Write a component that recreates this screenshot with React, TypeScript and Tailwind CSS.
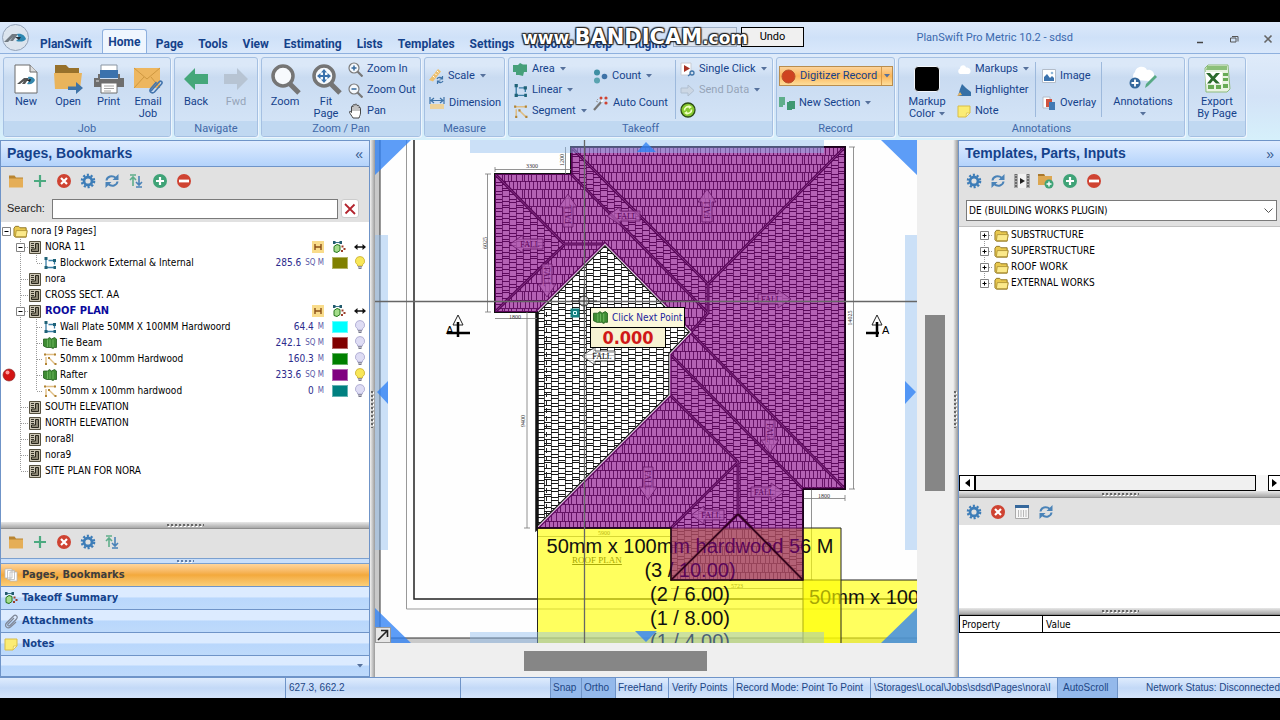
import { ReactNode } from "react";

const tahoma = "font-['DejaVu_Sans_Condensed','Liberation_Sans',sans-serif]";

const Caret = () => (
    <svg width="6" height="4" viewBox="0 0 6 4" className="shrink-0">
        <path d="M0 0h6L3 3.5z" fill="#56719c" />
    </svg>
);

/* ---------- toolbar icons ---------- */

const FolderIcon = () => (
    <svg width="16" height="16" viewBox="0 0 16 16">
        <path d="M1 2.5h5.5l1.5 2H15V8H1z" fill="#b98532" />
        <path d="M1 5.5h14v9H1z" fill="#e5ae57" />
    </svg>
);

const PlusIcon = () => (
    <svg width="16" height="16" viewBox="0 0 16 16">
        <path d="M8 2v12M2 8h12" stroke="#4caa80" strokeWidth="2.2" />
    </svg>
);

const DeleteIcon = () => (
    <svg width="16" height="16" viewBox="0 0 16 16">
        <circle cx="8" cy="8" r="7" fill="#cf4332" />
        <path d="M5 5l6 6M11 5l-6 6" stroke="#fff" strokeWidth="2.2" />
    </svg>
);

const GearIcon = () => (
    <svg width="16" height="16" viewBox="0 0 16 16" fill="none" stroke="#3d7db8">
        <circle cx="8" cy="8" r="4" strokeWidth="2.8" />
        <circle cx="8" cy="8" r="6.2" strokeWidth="2.2" strokeDasharray="2.1 1.8" />
    </svg>
);

const RefreshIcon = () => (
    <svg width="16" height="16" viewBox="0 0 16 16" fill="none" stroke="#4a83b8" strokeWidth="2">
        <path d="M2.5 7.5C3 3.5 8 1.8 12 5M13.5 8.5C13 12.5 8 14.2 4 11" />
        <path d="M14.5 1v6H8.500zM1.500 15V9h6z" fill="#4a83b8" stroke="none" />
    </svg>
);

const SortIcon = () => (
    <svg width="16" height="16" viewBox="0 0 16 16" fill="none" strokeWidth="1.6">
        <path d="M2 2h6M5 13V4M2 7l3-3 3 3" stroke="#5fae8b" />
        <path d="M8 14h6M11 3v9M8 9l3 3 3-3" stroke="#4a83b8" />
    </svg>
);

const AddCircleIcon = () => (
    <svg width="16" height="16" viewBox="0 0 16 16">
        <circle cx="8" cy="8" r="7" fill="#3fa377" />
        <path d="M8 4v8M4 8h8" stroke="#fff" strokeWidth="2.2" />
    </svg>
);

const RemoveCircleIcon = () => (
    <svg width="16" height="16" viewBox="0 0 16 16">
        <circle cx="8" cy="8" r="7" fill="#cf4332" />
        <path d="M3 8h10" stroke="#fff" strokeWidth="2.8" />
    </svg>
);

const FilmIcon = () => (
    <svg width="16" height="16" viewBox="0 0 16 16">
        <path d="M1 1h14v14H1z" fill="#f2f2f2" />
        <path d="M2 1v14M14 1v14" stroke="#6a6a6a" strokeWidth="3" />
        <path d="M2 2v13M14 2v13" stroke="#ddd" strokeWidth="1.2" strokeDasharray="1 2" />
        <path d="M6 5l5 3-5 3z" fill="#222" />
    </svg>
);

const FolderAddIcon = () => (
    <svg width="16" height="16" viewBox="0 0 16 16">
        <path d="M0 1h6l1 2h7v9H0z" fill="#dca751" />
        <path d="M0 1h6l1 2H0z" fill="#a9772c" />
        <circle cx="11" cy="11" r="4.5" fill="#3fa377" />
        <path d="M11 8.5v5M8.5 11h5" stroke="#fff" strokeWidth="1.4" />
    </svg>
);

const ColumnsIcon = () => (
    <svg width="16" height="16" viewBox="0 0 16 16">
        <path d="M1.5 2h13v12.5h-13z" fill="#f7f7f7" stroke="#aaa" />
        <path d="M1 1h14v3H1z" fill="#35689c" />
        <path d="M4.5 6v7M7 6v7M9.5 6v7M12 6v7" stroke="#b8b8b8" />
    </svg>
);

/* ---------- tree and nav icons ---------- */

const YellowFolder = () => (
    <svg width="15" height="13" viewBox="0 0 16 13" className="shrink-0">
        <path d="M1 3l1.500-2H6l1.500 1.500H14V5l1 .5-1 7H2.500L1 11z" fill="#e9c84d" stroke="#8d7424" />
        <path d="M3.500 5.500H15l-1 6.500H2.500z" fill="#fbe98a" stroke="#a58a2e" strokeWidth=".8" />
    </svg>
);

const PageIcon = () => (
    <svg width="12" height="13" viewBox="0 0 12 13" className="shrink-0">
        <path d="M.5.5h11v12H.5z" fill="#cdc7b6" stroke="#55503f" />
        <path d="M2.500 10.500V8h4V2.500h3v8z" fill="#8d8775" stroke="#2b281d" />
        <path d="M2 2.500h3M2 4.500h3M2 6.500h3" stroke="#39362b" />
    </svg>
);

const LinearIcon = ({ size = 14 }: { size?: number }) => (
    <svg width={size} height={size} viewBox="0 0 14 14" className="shrink-0">
        <path d="M3 2v9.500h8.500M5.500 4.500h6v4" fill="none" stroke="#3b7fa8" strokeWidth="1.3" />
        <path d="M1.500 1h3v3h-3zM1.500 10h3v3h-3zM10 3h3v3h-3zM10.500 10H13v3h-2.500z" fill="#1f6277" />
    </svg>
);

const AreaIcon = ({ size = 14 }: { size?: number }) => (
    <svg width={size} height={size} viewBox="0 0 14 14" className="shrink-0">
        <path d="M.5 3h4l2-1.500L8.500 3l3-1.500 2 1.500v8.500h-2l-1.500 1L8 11.500H3.500L.5 10z" fill="#3e8c33" stroke="#215d1c" strokeWidth=".8" />
        <path d="M4.500 3.500v7.500M7 3.500v7.500M10 3.500v7.500" stroke="#6cb55e" />
    </svg>
);

const SegmentIcon = ({ size = 14 }: { size?: number }) => (
    <svg width={size} height={size} viewBox="0 0 14 14" className="shrink-0">
        <path d="M2 2.500h10M3 5v6M6 6l6 6" stroke="#dfbd83" strokeWidth="1.4" />
        <path d="M1 1.500h2v2H1zM11 1.500h2v2h-2zM2 11h2v2H2zM5 5h2v2H5zM11.500 11h2v2h-2z" fill="#b18434" />
    </svg>
);

const Bulb = ({ on }: { on?: boolean }) => (
    <svg width="12" height="14" viewBox="0 0 12 14" className="shrink-0">
        <path
            d="M6 .5a4.500 4.500 0 0 1 2.500 8.300V10h-5V8.800A4.500 4.500 0 0 1 6 .5z"
            fill={on ? "#f8e758" : "#dedcf4"}
            stroke={on ? "#c9ad2d" : "#a6a3cd"}
            strokeWidth=".8"
        />
        <path d="M4 10.800h4M4.500 12.500h3" stroke="#77778c" strokeWidth="1.2" />
    </svg>
);

const SummaryIcon = () => (
    <svg width="14" height="14" viewBox="0 0 14 14" className="shrink-0">
        <path d="M2 2.500h7" stroke="#39758a" />
        <path d="M1 1h2.500v3H1zM7.500 1H10v3H7.500z" fill="#235b6e" />
        <path d="M2 6.500l3-2 3 1v5l-3 2-3-1z" fill="#a4dd8b" stroke="#26761d" />
        <path d="M9.500 5.500h2v2h-2zM11.500 8h2v2h-2zM9 10h2v2H9z" fill="#9c3f2b" />
    </svg>
);

const RowFlags = () => (
    <span className="flex items-center gap-2">
        <svg width="12" height="12" viewBox="0 0 12 12">
            <path d="M0 0h12v12H0z" fill="#f9dc8b" />
            <path d="M3 3v6M9 3v6M3 6h6" stroke="#8a4f18" strokeWidth="1.4" />
        </svg>
        <SummaryIcon />
        <svg width="12" height="10" viewBox="0 0 12 10">
            <path d="M0 5l3.500-3v2.200h5V2L12 5 8.500 8V5.800h-5V8z" fill="#111" />
        </svg>
    </span>
);

const dots = { stroke: "#9a9a9a", strokeDasharray: "1 1", fill: "none" };

const Expander = ({ x, plus }: { x: number; plus?: boolean }) => (
    <g>
        <path d={`M${x} 4.500h8v8h-8z`} fill="#fff" stroke="#848484" />
        <path d={`M${x + 2} 8.500h4`} stroke="#000" />
        {plus && <path d={`M${x + 4} 6.500v4`} stroke="#000" />}
    </g>
);

/* ---------- left tree ---------- */

type Node = {
    name: string;
    level: 0 | 1 | 2;
    kind: "root" | "page" | "linear" | "area" | "segment";
    value?: string;
    unit?: string;
    color?: string;
    lit?: boolean;
    open?: boolean;
    active?: boolean;
    recording?: boolean;
    last?: boolean;
};

const nodes: Node[] = [
    { name: "nora [9 Pages]", level: 0, kind: "root" },
    { name: "NORA 11", level: 1, kind: "page", open: true },
    { name: "Blockwork External & Internal", level: 2, kind: "linear", value: "285.6", unit: "SQ M", color: "bg-[#808000]", lit: true, last: true },
    { name: "nora", level: 1, kind: "page" },
    { name: "CROSS SECT. AA", level: 1, kind: "page" },
    { name: "ROOF PLAN", level: 1, kind: "page", open: true, active: true },
    { name: "Wall Plate 50MM X 100MM Hardwoord", level: 2, kind: "linear", value: "64.4", unit: "M", color: "bg-[#00ffff]" },
    { name: "Tie Beam", level: 2, kind: "area", value: "242.1", unit: "SQ M", color: "bg-[#800000]" },
    { name: "50mm x 100mm Hardwood", level: 2, kind: "segment", value: "160.3", unit: "M", color: "bg-[#008000]" },
    { name: "Rafter", level: 2, kind: "area", value: "233.6", unit: "SQ M", color: "bg-[#800080]", lit: true, recording: true },
    { name: "50mm x 100mm hardwood", level: 2, kind: "segment", value: "0", unit: "M", color: "bg-[#008080]", last: true },
    { name: "SOUTH ELEVATION", level: 1, kind: "page" },
    { name: "NORTH ELEVATION", level: 1, kind: "page" },
    { name: "nora8l", level: 1, kind: "page" },
    { name: "nora9", level: 1, kind: "page" },
    { name: "SITE PLAN FOR NORA", level: 1, kind: "page", last: true },
];

const Guides = ({ node }: { node: Node }) => {
    const width = [12, 28, 42][node.level];
    return (
        <svg width={width} height="16" viewBox={`0 0 ${width} 16`} className="shrink-0">
            {node.level === 0 && <Expander x={1.5} />}
            {node.level === 1 && <path d={`M19.500 0v${node.last ? 8 : 16}M20 8.500h8`} {...dots} />}
            {node.level === 2 && <path d={`M19.500 0v16M35.500 0v${node.last ? 8 : 16}M36 8.500h6`} {...dots} />}
            {node.open && <Expander x={15.5} />}
            {node.recording && (
                <>
                    <circle cx="8" cy="8" r="6" fill="#d31414" stroke="#8b2a2a" strokeWidth=".7" />
                    <circle cx="6.500" cy="5.500" r="2" fill="#ff9a9a" />
                </>
            )}
        </svg>
    );
};

const TreeRow = ({ node }: { node: Node }) => (
    <li className="flex h-4 items-center pr-[3px]">
        <Guides node={node} />
        {node.kind === "root" && <YellowFolder />}
        {node.kind === "page" && <PageIcon />}
        {node.kind === "linear" && <LinearIcon />}
        {node.kind === "area" && <AreaIcon />}
        {node.kind === "segment" && <SegmentIcon />}
        <span className={node.active ? "ml-1 grow text-[11px] font-bold text-[#0a0a9c]" : node.level === 1 ? "ml-1 grow" : "ml-[3px] grow"}>
            {node.name}
        </span>
        {node.open && <RowFlags />}
        {node.value && (
            <>
                <span className="text-[#2b2b8c]">{node.value}</span>
                <span className="ml-1 text-[8px] text-[#5a5aa8]">{node.unit}</span>
                <span className={`mr-[6px] ml-2 h-3 w-4 border border-white/40 ${node.color}`} />
                <Bulb on={node.lit} />
            </>
        )}
    </li>
);

/* ---------- ribbon ---------- */

const Group = ({ title, className, children }: { title?: string; className: string; children: ReactNode }) => (
    <section className={`flex h-20 shrink-0 flex-col overflow-hidden rounded-[3px] border border-[#a5c0e2] bg-linear-to-b from-[#dbe8f8] from-10% via-[#c9dbf1] via-25% to-[#d6e6f8] shadow-[1px_1px_0_#eef5fd] ${className}`}>
        <div className="flex min-h-0 grow">{children}</div>
        <h2 className="h-[15px] shrink-0 bg-[#c0d8f1] text-center text-[11px] leading-[15px] text-[#4168a8]">{title}</h2>
    </section>
);

const BigButton = ({ icon, label, more, caret, className = "" }: { icon: ReactNode; label: string; more?: string; caret?: boolean; className?: string }) => (
    <button className={`flex flex-col items-center pt-1 leading-3 ${className}`}>
        <span className="flex h-[34px] items-center">{icon}</span>
        {label}
        <span className="flex items-center gap-1">
            {more}
            {caret && <span className="my-1 flex"><Caret /></span>}
        </span>
    </button>
);

const SmallButton = ({ icon, label, caret, disabled }: { icon: ReactNode; label: string; caret?: boolean; disabled?: boolean }) => (
    <button disabled={disabled} className="flex h-[18px] items-center gap-1 whitespace-nowrap disabled:text-[#96a4b8]">
        {icon}
        {label}
        {caret && <span className="ml-px flex"><Caret /></span>}
    </button>
);

const NewIcon = () => (
    <svg width="26" height="32" viewBox="0 0 26 32">
        <path d="M2 2h15l7 7v21H2z" fill="#fff" stroke="#6d6d6d" />
        <path d="M17 2v7h7" fill="#ddd" stroke="#6d6d6d" />
        <path d="M4 21l7-6h5l-4 6H9l2-3-4 3z" fill="#555" />
        <path d="M15 14c4-1 6 1 7 3-1 3-4 5-8 4l2-3z" fill="#3687ad" />
        <path d="M13 17l5-1-1 3z" fill="#222" />
    </svg>
);

const OpenIcon = () => (
    <svg width="30" height="30" viewBox="0 0 30 30">
        <path d="M2 1h11l3 3h10v7H2z" fill="#97712b" />
        <path d="M1 9h28l-2 16H2z" fill="#e9b45c" />
        <path d="M15 22.500h8v-4.500l7 6-7 6v-4h-8z" fill="#3e73a8" />
    </svg>
);

const PrintIcon = () => (
    <svg width="30" height="30" viewBox="0 0 30 30">
        <path d="M7 1h16v7H7z" fill="#fff" stroke="#8995a2" />
        <path d="M6 6h18v8H6z" fill="#3b72ad" />
        <path d="M0 14h4v-4h2v5h18v-5h2v4h4v9H0z" fill="#6e6e6e" />
        <path d="M7 19h16v10H7z" fill="#fff" stroke="#6e6e6e" />
        <path d="M10 22h10M10 24.500h10M10 27h7" stroke="#a4a4a4" />
        <path d="M2 17h3" stroke="#e6e6e6" />
    </svg>
);

const MailIcon = () => (
    <svg width="30" height="30" viewBox="0 0 30 30">
        <path d="M1 4h26v20H1z" fill="#edb65f" />
        <path d="M1 4l13 11L27 4M1 24l10-11M27 24l-9-11" fill="none" stroke="#cf9840" />
        <path d="M18 27l8-9c2-2 4 0 2.500 2l-7 8c-2 2-6 0-4-3l6-7" fill="none" stroke="#4475ad" strokeWidth="1.6" />
    </svg>
);

const ArrowIcon = ({ right }: { right?: boolean }) => (
    <svg width="26" height="26" viewBox="0 0 26 26">
        {right ? (
            <path d="M25 13L14 2v6H1v10h13v6z" fill="#b7c4d3" />
        ) : (
            <path d="M1 13L12 2v6h13v10H12v6z" fill="#45a77a" />
        )}
    </svg>
);

const ZoomIcon = ({ fit }: { fit?: boolean }) => (
    <svg width="31" height="31" viewBox="0 0 31 31">
        <path d="M20 20l9 9" stroke="#757575" strokeWidth="5" />
        <circle cx="13" cy="12" r="10" fill="#f7fafd" stroke="#757575" strokeWidth="3.5" />
        {fit && (
            <path d="M13 5l3 3.500h-2V11h2.500V9l3.500 3-3.500 3v-2H14v2.500h2L13 19l-3-3.500h2V13H9.500v2L6 12l3.500-3v2H12V8.500h-2z" fill="#3b72ad" />
        )}
    </svg>
);

const SmallZoom = ({ plus }: { plus?: boolean }) => (
    <svg width="15" height="15" viewBox="0 0 15 15">
        <path d="M9.500 9.500l5 5" stroke="#777" strokeWidth="2.2" />
        <circle cx="6" cy="6" r="5" fill="#f4f8fc" stroke="#7b7b7b" strokeWidth="1.2" />
        <path d={plus ? "M3.500 6h5M6 3.500v5" : "M3.500 6h5"} stroke="#35689c" strokeWidth="1.5" />
    </svg>
);

const HandIcon = () => (
    <svg width="15" height="16" viewBox="0 0 15 16">
        <path d="M5 15c-1-2-3-4-3.500-6 0-1 1-1 2 .5V4c0-1.200 1.500-1.200 1.500 0V2.500C5 1.200 7 1.200 7 2.500V2c0-1.200 2-1.200 2 .3V3c.3-1 2-1 2 .3V5c.3-1 1.500-.8 1.500.3V10c0 2-1 3-1.500 5z" fill="#fff" stroke="#333" strokeWidth=".9" />
        <path d="M5 4v4M7 3v5M9 3v5M11 5v3" stroke="#555" strokeWidth=".7" />
    </svg>
);

const ScaleIcon = () => (
    <svg width="15" height="16" viewBox="0 0 15 16">
        <path d="M0 12L9 1l3 2.500-8 10z" fill="#edc06e" />
        <path d="M4 8l1.500 1.500M6 5.500L7.500 7M8 3l1.500 1.500" stroke="#fff" />
        <path d="M8 11c1-2 4-2 5-.5M14 13c-1 2-4 2-5 .5M13.500 8v3h-3M8.500 16v-3h3" fill="none" stroke="#3e73a8" strokeWidth="1.2" />
    </svg>
);

const DimensionIcon = () => (
    <svg width="16" height="12" viewBox="0 0 16 12">
        <path d="M1 7h14v5H1z" fill="#ecd29b" />
        <path d="M1 0v7M15 0v7M2 3.500h12M5 1L2 3.500 5 6M11 1l3 2.500L11 6" fill="none" stroke="#3e73a8" strokeWidth="1.2" />
    </svg>
);

const TakeoffArea = () => (
    <svg width="15" height="15" viewBox="0 0 15 15">
        <path d="M0 3h5l2-2 3 1.500h4V10h-3l-1 4-4-1H3v-3H0z" fill="#46a07a" />
    </svg>
);

const CountIcon = () => (
    <svg width="15" height="15" viewBox="0 0 15 15">
        <circle cx="4" cy="3.500" r="3" fill="#3f8fa3" />
        <circle cx="11.500" cy="7.500" r="2.800" fill="#3e73a8" />
        <circle cx="4" cy="11.500" r="3" fill="#5aa3b0" />
    </svg>
);

const WandIcon = () => (
    <svg width="16" height="15" viewBox="0 0 16 15">
        <path d="M1 14L9 5" stroke="#777" strokeWidth="2.2" />
        <path d="M8 6l2-2" stroke="#fff" strokeWidth="2" />
        <circle cx="8" cy="2" r="1.500" fill="#cf4332" />
        <circle cx="13" cy="2" r="1.600" fill="#cf4332" />
        <circle cx="13" cy="7" r="1.600" fill="#cf4332" />
        <path d="M3 5l2 1M4 3l1 1" stroke="#999" />
    </svg>
);

const ClickIcon = () => (
    <svg width="15" height="15" viewBox="0 0 15 15">
        <path d="M1 1h10v12H1z" fill="#fff" stroke="#c8ccd4" />
        <path d="M4 3l6 3.500L4 10z" fill="#a83224" />
        <circle cx="12" cy="11" r="2" fill="none" stroke="#3e73a8" strokeWidth="1.3" />
        <path d="M8 14l2.500-2" stroke="#3e73a8" strokeWidth="1.3" />
    </svg>
);

const SendIcon = () => (
    <svg width="15" height="13" viewBox="0 0 15 13">
        <path d="M1 4h7V1l6 5.500L8 12V9H1z" fill="#ccd7e4" stroke="#b0bfd0" />
    </svg>
);

const GreenRefresh = () => (
    <svg width="16" height="16" viewBox="0 0 16 16">
        <circle cx="8" cy="8" r="7" fill="#86c92f" stroke="#2d4d16" strokeWidth="1.3" />
        <path d="M4.500 8.500a3.500 3.500 0 0 1 5-3.500M11.500 7.500a3.500 3.500 0 0 1-5 3.500" fill="none" stroke="#f1ffc0" strokeWidth="1.6" />
        <path d="M8.500 3l3.500 2-3 2zM7.500 13L4 11l3-2z" fill="#f1ffc0" />
    </svg>
);

const SectionIcon = () => (
    <svg width="16" height="15" viewBox="0 0 16 15">
        <path d="M0 1h6v8H4v2H0z" fill="#5fae8b" />
        <path d="M8 6h2V5h6v8h-3v1H8z" fill="#3f9871" />
    </svg>
);

const CloudIcon = () => (
    <svg width="14" height="11" viewBox="0 0 14 11">
        <path d="M3 10a3 3 0 0 1 0-5.500C3 1 8 0 9 3.500c3-.5 5 2 4.500 4 0 1.500-1 2.500-2 2.500z" fill="#fff" />
    </svg>
);

const HighlighterIcon = () => (
    <svg width="14" height="14" viewBox="0 0 14 14">
        <path d="M1 13l2-7 2-5 4 4 5 4v4H5z" fill="#3670a6" />
        <path d="M0 13l3-4 2 3z" fill="#edb65f" />
    </svg>
);

const NoteIcon = () => (
    <svg width="14" height="13" viewBox="0 0 14 13" className="shrink-0">
        <path d="M1 1h12v7l-4 4H1z" fill="#fbec74" stroke="#d9bd47" />
        <path d="M13 8H9.500L9 12z" fill="#fff8c4" stroke="#d9bd47" strokeWidth=".7" />
    </svg>
);

const ImageIcon = () => (
    <svg width="14" height="14" viewBox="0 0 14 14">
        <path d="M.5.5h13v13H.5z" fill="#fff" stroke="#b3bcc8" />
        <path d="M2 12V8l3-3 3 4 2-2 2 2v3z" fill="#3b72ad" />
        <circle cx="10" cy="4" r="1.300" fill="#8eb6d8" />
    </svg>
);

const OverlayIcon = () => (
    <svg width="14" height="15" viewBox="0 0 14 15">
        <path d="M1 1h7v11H1z" fill="#fff" stroke="#b3bcc8" />
        <path d="M4 3h6v8H4z" fill="#cf5340" />
        <path d="M7 6h6v8H7z" fill="#4079b4" />
    </svg>
);

const AnnotationsIcon = () => (
    <svg width="30" height="26" viewBox="0 0 30 26">
        <path d="M7 14a5 5 0 0 1 0-8c1-6 10-7 12-2 5-1 8 3 7 7-1 3-3 4-5 4z" fill="#fff" />
        <path d="M17 22l1-4 9-9 2 2-9 9z" fill="#58a985" />
        <circle cx="7" cy="17" r="5.500" fill="#35689c" />
        <path d="M7 13.500v7M3.500 17h7" stroke="#fff" strokeWidth="1.8" />
    </svg>
);

const ExcelIcon = () => (
    <svg width="30" height="30" viewBox="0 0 30 30">
        <path d="M3 4l3-3h20l2 24-3 3H4z" fill="#e9f3e2" stroke="#8dbb7d" />
        <path d="M5 2h20v4H4z" fill="#8cc07a" />
        <path d="M3 8h17v12H4z" fill="#fff" />
        <path d="M4 9h4l3 3.500L14 9h4l-5 5.500 5 5h-4l-3-3-2.500 3H5l4-5z" fill="#2b6a2c" />
        <path d="M21 9h5v3h-5zM21 14h5v3h-5zM21 20h5v4h-5zM14 21h5v4h-5zM6 21h6v4H6z" fill="#68ab55" />
    </svg>
);

const RecordDot = () => (
    <svg width="15" height="15" viewBox="0 0 15 15">
        <circle cx="7.500" cy="7.500" r="6.500" fill="#cf4320" stroke="#b9532d" />
    </svg>
);

const tabs = ["Page", "Tools", "View", "Estimating", "Lists", "Templates", "Settings", "Reports", "Help", "Plugins"];

const TitleBar = () => (
    <header className="relative flex h-[31px] shrink-0 items-end bg-linear-to-b from-[#dce9fa] via-[#cfe1f8] to-[#d9e8fb] text-[#15428b]">
        <button aria-label="Application menu" className="mb-px ml-px flex">
            <svg width="29" height="29" viewBox="0 0 29 29">
                <circle cx="14.500" cy="14.500" r="13" fill="#dbe4ee" stroke="#92a2b8" />
                <path d="M3 19l8-8h6l-5 7H9l3-4-5 5z" fill="#717a82" />
                <path d="M16 11c5-1 8 2 9 5-2 3-6 3-10 2l3-3z" fill="#2d87b1" />
                <path d="M14 14h6l-2 3z" fill="#28323b" />
            </svg>
        </button>
        <nav className="flex items-end text-[12px] font-bold">
            <button className="h-[18px] px-[10px]">PlanSwift</button>
            <button className="h-6 w-[45px] rounded-t-[3px] border border-b-0 border-[#8eb0de] bg-[#eff6fe]">Home</button>
            <div className="flex gap-[15px] pl-[9px]">
                {tabs.map((tab) => (
                    <button key={tab} className="h-[18px]">{tab}</button>
                ))}
            </div>
        </nav>
        <h1 className="mb-[7px] ml-auto text-[11px] text-[#3b69ae]">PlanSwift Pro Metric 10.2 - sdsd</h1>
        <div className="mb-[9px] ml-[122px] flex items-center gap-6 pr-[7px]">
            <button aria-label="Minimize"><svg width="10" height="10"><path d="M2 8.500h6" stroke="#444" strokeWidth="1.5" /></svg></button>
            <button aria-label="Restore"><svg width="10" height="10"><path d="M3 2.500h6v5M1.500 4h5.500v4H1.500z" fill="none" stroke="#555" /></svg></button>
            <button aria-label="Close"><svg width="10" height="10"><path d="M1.500 1.500l7 7M8.500 1.500l-7 7" stroke="#666" strokeWidth="1.6" /></svg></button>
        </div>
        <div className="absolute top-[5px] left-[673px] flex text-[11px] text-black">
            <div className="h-5 w-[64px] border border-[#9fb0c6] bg-[#dfe5ee]" />
            <button className="ml-1 h-5 w-[63px] border border-black bg-[#f0f0f0]">Undo</button>
        </div>
        <p className="absolute top-px left-[522px] flex items-baseline font-['DejaVu_Sans',sans-serif] text-[21px] leading-7 font-bold whitespace-nowrap text-white [text-shadow:0_0_2px_#000,1px_1px_1px_#333,-1px_-1px_1px_#333,1px_-1px_1px_#333,-1px_1px_1px_#333]">
            <span className="text-[17px]">www.</span>BANDICAM<span className="text-[17px]">.com</span>
        </p>
    </header>
);

const Ribbon = () => (
    <div className="flex h-[87px] shrink-0 gap-[3px] overflow-hidden border-t border-[#8eb0de] bg-linear-to-b from-[#dfebfa] via-[#d3e3f7] to-[#d6f0fb] px-[3px] pt-[3px] text-[11px] text-[#15428b]">
        <Group title="Job" className="w-[168px]">
            <BigButton className="w-11" icon={<NewIcon />} label="New" />
            <BigButton className="w-10" icon={<OpenIcon />} label="Open" />
            <BigButton className="w-[41px]" icon={<PrintIcon />} label="Print" />
            <BigButton className="w-[38px]" icon={<MailIcon />} label="Email" more="Job" />
        </Group>
        <Group title="Navigate" className="w-[84px]">
            <BigButton className="w-[42px]" icon={<ArrowIcon />} label="Back" />
            <BigButton className="w-[38px] text-[#96a4b8]" icon={<ArrowIcon right />} label="Fwd" />
        </Group>
        <Group title="Zoom / Pan" className="w-[160px]">
            <BigButton className="w-[46px]" icon={<ZoomIcon />} label="Zoom" />
            <BigButton className="w-[36px]" icon={<ZoomIcon fit />} label="Fit" more="Page" />
            <div className="ml-1 flex flex-col items-start gap-[3px] pt-[2px]">
                <SmallButton icon={<SmallZoom plus />} label="Zoom In" />
                <SmallButton icon={<SmallZoom />} label="Zoom Out" />
                <SmallButton icon={<HandIcon />} label="Pan" />
            </div>
        </Group>
        <Group title="Measure" className="w-[81px]">
            <div className="flex flex-col items-start gap-[9px] pt-[9px] pl-1">
                <SmallButton icon={<ScaleIcon />} label="Scale" caret />
                <SmallButton icon={<DimensionIcon />} label="Dimension" />
            </div>
        </Group>
        <Group title="Takeoff" className="w-[265px]">
            <div className="flex w-20 flex-col items-start gap-[3px] pt-[2px] pl-1">
                <SmallButton icon={<TakeoffArea />} label="Area" caret />
                <SmallButton icon={<LinearIcon size={15} />} label="Linear" caret />
                <SmallButton icon={<SegmentIcon size={15} />} label="Segment" caret />
            </div>
            <div className="flex w-[86px] flex-col items-start gap-[9px] pt-[9px] pl-1">
                <SmallButton icon={<CountIcon />} label="Count" caret />
                <SmallButton icon={<WandIcon />} label="Auto Count" />
            </div>
            <div className="my-[2px] flex flex-col items-start gap-[3px] border-l border-[#9db9dc] pl-1">
                <SmallButton icon={<ClickIcon />} label="Single Click" caret />
                <SmallButton icon={<SendIcon />} label="Send Data" caret disabled />
                <button aria-label="Refresh"><GreenRefresh /></button>
            </div>
        </Group>
        <Group title="Record" className="w-[119px]">
            <div className="flex flex-col items-start gap-2 pt-2 pl-[2px]">
                <div className="flex h-5 items-center border border-[#b98d4e] bg-linear-to-b from-[#fbd39b] via-[#fbb659] to-[#fddd9a] pl-px">
                    <SmallButton icon={<RecordDot />} label="Digitizer Record" />
                    <button aria-label="Record options" className="ml-1 flex h-full w-[11px] items-center justify-center border-l border-[#d59a4c]"><Caret /></button>
                </div>
                <SmallButton icon={<SectionIcon />} label="New Section" caret />
            </div>
        </Group>
        <Group title="Annotations" className="w-[287px]">
            <BigButton
                className="w-14"
                icon={<span className="h-[26px] w-[26px] rounded-[4px] border border-[#f2f6fb] bg-black" />}
                label="Markup"
                more="Color"
                caret
            />
            <div className="flex w-20 flex-col items-start gap-[3px] pt-[2px] pl-[2px]">
                <SmallButton icon={<CloudIcon />} label="Markups" caret />
                <SmallButton icon={<HighlighterIcon />} label="Highlighter" />
                <SmallButton icon={<NoteIcon />} label="Note" />
            </div>
            <div className="my-1 flex w-[67px] flex-col items-start gap-[9px] border-x border-[#9db9dc] pt-[5px] pl-[6px]">
                <SmallButton icon={<ImageIcon />} label="Image" />
                <SmallButton icon={<OverlayIcon />} label="Overlay" />
            </div>
            <BigButton className="w-[82px]" icon={<AnnotationsIcon />} label="Annotations" caret />
        </Group>
        <Group className="w-[58px]">
            <BigButton className="w-14" icon={<ExcelIcon />} label="Export" more="By Page" />
        </Group>
    </div>
);

/* ---------- shared panel parts ---------- */

const Tools = ({ items, className = "" }: { items: [string, ReactNode][]; className?: string }) => (
    <div className={`flex shrink-0 items-center gap-2 bg-[#e1e1e1] px-[7px] ${className}`}>
        {items.map(([label, icon]) => (
            <button key={label} aria-label={label}>{icon}</button>
        ))}
    </div>
);

const Grip = ({ blue }: { blue?: boolean }) => (
    <div className={blue
        ? "flex h-[6px] shrink-0 items-center justify-center border-y border-[#7ba0cf] bg-[#c9dffb]"
        : "flex h-[7px] shrink-0 items-center justify-center border-b border-[#8f8f8f] bg-linear-to-b from-[#e8e8e8] to-[#a8a8a8]"}
    >
        <svg width={blue ? 18 : 38} height="3">
            <path d="M1 1h38" stroke={blue ? "#5f7da8" : "#666"} strokeWidth="2" strokeDasharray="2 2" />
            <path d="M2 2.500h38" stroke="#fff" strokeDasharray="2 2" />
        </svg>
    </div>
);

const Splitter = () => (
    <div className="flex w-[5px] shrink-0 flex-col items-center justify-center bg-linear-to-r from-[#f2f2f2] to-[#9b9b9b]">
        <svg width="3" height="38">
            <path d="M1 1v37" stroke="#666" strokeWidth="2" strokeDasharray="2 2" />
            <path d="M2.500 2v36" stroke="#fff" strokeDasharray="2 2" />
        </svg>
    </div>
);

const PanelTitle = ({ children, glyph }: { children: ReactNode; glyph: string }) => (
    <div className="flex h-[27px] shrink-0 items-center border-y border-[#6f94c8] bg-linear-to-b from-[#dfecff] to-[#b4d3fb] pr-[6px] pl-[6px]">
        <h2 className="grow text-[14px] font-bold text-[#15428b]">{children}</h2>
        <button aria-label="Collapse panel" className="text-[14px] leading-4 text-[#35598f]">{glyph}</button>
    </div>
);

const navItems: [string, ReactNode][] = [
    ["Pages, Bookmarks", (
        <svg key="p" width="14" height="14" viewBox="0 0 14 14">
            <path d="M1 1h7v9H1zM3.500 2.500h7v9h-7zM6 4h7v9H6z" fill="#fff" stroke="#b9b9b9" strokeWidth=".8" />
        </svg>
    )],
    ["Takeoff Summary", <SummaryIcon key="t" />],
    ["Attachments", (
        <svg key="a" width="14" height="15" viewBox="0 0 14 15">
            <path d="M10 4l-6 6c-1 1.500 1 2.500 2 1.500l6.500-6.500c2-2.500-1-5-3-3L2.500 9c-2.500 3 1 6.500 4 4L12 8" fill="none" stroke="#7f8797" strokeWidth="1.2" />
        </svg>
    )],
    ["Notes", <NoteIcon key="n" />],
];

const LeftPanel = () => (
    <aside className="flex w-[370px] shrink-0 flex-col border-x border-[#6f94c8]">
        <PanelTitle glyph="«">Pages, Bookmarks</PanelTitle>
        <Tools
            className="h-[28px]"
            items={[
                ["New folder", <FolderIcon />],
                ["Add", <PlusIcon />],
                ["Delete", <DeleteIcon />],
                ["Settings", <GearIcon />],
                ["Refresh", <RefreshIcon />],
                ["Sort", <SortIcon />],
                ["Expand all", <AddCircleIcon />],
                ["Collapse all", <RemoveCircleIcon />],
            ]}
        />
        <div className="flex h-[27px] shrink-0 items-center bg-[#e1e1e1] pr-[10px] pl-[6px] text-[11px]">
            <label htmlFor="search" className="w-[45px] text-[#222]">Search:</label>
            <input id="search" className="h-5 min-w-0 grow border border-[#7a7a7a] bg-white px-1" />
            <button aria-label="Clear search" className="ml-[3px] flex h-[19px] w-[18px] items-center justify-center rounded-[3px] border border-[#ccc] bg-white">
                <svg width="12" height="12"><path d="M1 1l10 10M10.500 1.500L1.500 10.500" stroke="#b3242e" strokeWidth="1.8" /></svg>
            </button>
        </div>
        <ul className={`min-h-0 grow overflow-hidden bg-white pt-px text-[10px] leading-4 text-black ${tahoma}`}>
            {nodes.map((node, i) => (
                <TreeRow key={i} node={node} />
            ))}
        </ul>
        <Grip />
        <Tools
            className="h-[29px] pb-[3px]"
            items={[
                ["New bookmark folder", <FolderIcon />],
                ["Add bookmark", <PlusIcon />],
                ["Delete bookmark", <DeleteIcon />],
                ["Bookmark settings", <GearIcon />],
                ["Sort bookmarks", <SortIcon />],
            ]}
        />
        <Grip blue />
        <nav className={`flex h-[113px] shrink-0 flex-col text-[11px] font-bold text-[#15428b] ${tahoma}`}>
            {navItems.map(([label, icon], i) => (
                <button
                    key={label}
                    className={i === 0
                        ? "flex h-[23px] items-center gap-1 border-b border-[#6f94c8] bg-linear-to-b from-[#ffd59a] via-[#f3a93c] to-[#fbcf78] px-[3px] text-[#3d3d3d]"
                        : "flex h-[23px] items-center gap-1 border-b border-[#6f94c8] bg-linear-to-b from-[#dcebff] from-45% via-[#b9d7fc] via-50% to-[#bedafb] px-[3px]"}
                >
                    {icon}
                    {label}
                </button>
            ))}
            <div className="flex flex-1 items-center justify-end border-b border-[#6f94c8] bg-linear-to-b from-[#dcebff] from-45% via-[#b9d7fc] via-50% to-[#bedafb] pr-[6px]">
                <button aria-label="Configure buttons"><Caret /></button>
            </div>
        </nav>
    </aside>
);

/* ---------- drawing canvas ---------- */

const roof = "495,174 571,174 571,147 845,147 845,489 803,489 803,580 671,580 671,528 537,528 537,312 495,312";
const openArea = "M605 244L691 332L670 354V395L537 528V312z";
const flatFaces = "M571 147H845L708 284zM495 174H571L708 312L691 332L605 244H564zM564 245H605L537 312H495zM691 334L845 489H803L670 354zM670 395L738 462L671 528H537zM738 514L803 580H671z";
const sideFaces = "M495 174L564 245L495 312zM571 147L708 284V312L571 174zM845 147V489L691 332L708 312V284zM605 244L691 332L670 354V395L537 528V312zM670 354L803 489V580L738 514V462L670 395zM738 462V514L671 580V528z";
const ridges = "M495 174L564 244H605M564 245L495 312M571 147L708 284L845 147M708 284V313L691 332M571 174L708 313M691 333L845 489M670 354L803 489M670 395L738 462V514M738 462L671 528M738 514L803 580M738 514L671 580";

const falls = [
    { x: 527, y: 244, r: 180 },
    { x: 568, y: 211, r: -90 },
    { x: 547, y: 280, r: 90 },
    { x: 707, y: 206, r: -90 },
    { x: 624, y: 216, r: 180 },
    { x: 774, y: 299, r: 0 },
    { x: 599, y: 356, r: 180 },
    { x: 770, y: 436, r: 90 },
    { x: 767, y: 492, r: 0 },
    { x: 708, y: 515, r: 180 },
    { x: 648, y: 483, r: 90 },
];

const FallArrow = ({ x, y, r }: { x: number; y: number; r: number }) => (
    <g transform={`translate(${x} ${y})`}>
        <path transform={`rotate(${r})`} d="M-16 -5H4V-9L17 0L4 9V5H-16z" fill="#fff" fillOpacity=".7" stroke="#333" strokeWidth=".8" />
        <text transform={`rotate(${r === 180 ? 0 : r})`} x={r === 180 ? 3 : -3} y="3" textAnchor="middle" fontSize="8" fontFamily="'Liberation Serif', serif">FALL</text>
    </g>
);

const SectionMark = ({ x, labelX }: { x: number; labelX: number }) => (
    <g>
        <path d={`M${x} 315l-5 10h10z`} fill="#fff" stroke="#222" />
        <path d={`M${x} 322v15M${x - 11} 333h${labelX < x ? 23 : 13}`} stroke="#000" strokeWidth="2.5" />
        <text x={labelX} y="334" fontSize="11" fontFamily="'Liberation Sans', sans-serif">A</text>
    </g>
);

const Plan = () => (
    <svg viewBox="375 140 542 503" preserveAspectRatio="xMinYMin slice" className="absolute inset-0 h-full w-full bg-[#fefefe]" role="img" aria-label="Roof plan">
        <defs>
            <pattern id="rows" width="20" height="17" patternUnits="userSpaceOnUse" x="571" y="147">
                <path d="M0 .5h20M0 8.500h20M2.500 0v8M6.500 0v8M9.500 0v8M14.500 0v8M18.500 0v8M.5 9v8M5.500 9v8M11.500 9v8M13.500 9v8M17.500 9v8" stroke="#000" strokeWidth=".8" />
            </pattern>
            <pattern id="cols" width="14" height="17" patternUnits="userSpaceOnUse" x="537" y="147">
                <path d="M.5 0v17M7.500 0v17" stroke="#000" strokeWidth=".7" />
                <path d="M0 1.500h7M0 4.500h7M0 10.500h7M0 13.500h7M7 3.500h7M7 7.500h7M7 9.500h7M7 15.500h7" stroke="#000" strokeWidth=".9" />
            </pattern>
        </defs>
        <g fill="none" stroke="#222">
            <path d="M414 140V599H917" strokeWidth="1.5" />
            <path d="M406.500 140V609H917" stroke="#999" />
        </g>
        <path d="M375 140H380V638H917V643H375z" fill="#c9c9c9" />
        <path d="M380 140V638H917" fill="none" stroke="#333" />

        <polygon points={roof} fill="#fff" />
        <path d={flatFaces} fill="url(#rows)" />
        <path d={sideFaces} fill="url(#cols)" />
        <path d={ridges} fill="none" stroke="#111" strokeWidth="3" />
        <path d={ridges} fill="none" stroke="#aaa" strokeWidth=".7" />
        <path d={openArea} fill="none" stroke="#111" strokeWidth="3.5" />
        <path d="M537 312L605 244L691 332L670 354V395L537 528" fill="none" stroke="#fff" strokeWidth="1.3" />
        <polygon points={roof} fill="none" stroke="#111" strokeWidth="2" />
        <path d="M546.500 312V518" stroke="#222" strokeDasharray="5 3" />
        {falls.map((f, i) => (
            <FallArrow key={i} x={f.x} y={f.y} r={f.r} />
        ))}

        <path
            d="M495 169.500H571M495 167v5M565.500 147V174M487.500 174V312M485 174h6M485 312h6M495 318.500H537M527 312V528M524 528h6M849 147H855M853.500 147V489M849 489H855M803 498.500H845M845 495v6M811.500 489V580M803 580h10M537 536.500H671M671 588.500H803"
            fill="none"
            stroke="#777"
            strokeWidth=".8"
        />
        <g fontSize="6" fontFamily="'Liberation Serif', serif" textAnchor="middle" fill="#333">
            <text x="532" y="168">3300</text>
            <text transform="translate(564 160) rotate(-90)">1200</text>
            <text transform="translate(487 243) rotate(-90)">6025</text>
            <text x="515" y="319">1800</text>
            <text transform="translate(525 421) rotate(-90)">9400</text>
            <text transform="translate(852 318) rotate(-90)">14025</text>
            <text x="824" y="498">1800</text>
            <text x="604" y="535">5900</text>
            <text x="737" y="588">5723</text>
        </g>
        <text x="597" y="563" fontSize="9" textAnchor="middle" fontFamily="'Liberation Serif', serif" textDecoration="underline">ROOF PLAN</text>
        <SectionMark x={458} labelX={446} />
        <SectionMark x={877} labelX={882} />

        <g fontSize="20" fontFamily="'Liberation Sans', sans-serif" fill="#111">
            <path d="M803 580H930V650H803z" fill="#ffff00" fillOpacity=".63" stroke="#222" />
            <text x="809" y="604">50mm x 100mm hardwood</text>
            <path d="M537.500 528H841V650H537.500z" fill="#ffff00" fillOpacity=".63" stroke="#222" />
            <g textAnchor="middle">
                <text x="690" y="553">50mm x 100mm hardwood 56 M</text>
                <text x="690" y="577">(3 / 10.00)</text>
                <text x="690" y="601">(2 / 6.00)</text>
                <text x="690" y="625">(1 / 8.00)</text>
                <text x="690" y="648">(1 / 4.00)</text>
            </g>
        </g>
        <path d={`M${roof}z${openArea}`} fillRule="evenodd" fill="#860086" fillOpacity=".62" />
        <path d="M803 489V580H671V528H537M571 147H845V489H803" fill="none" stroke="#1c001c" strokeWidth="1.5" />
        <path d="M738 514L803 580M738 514L671 580" stroke="#2c0018" strokeWidth="1.5" />

        <path d="M470 140H824V153H470zM470 632H824V643H470zM375 235H388V550H375zM905 235H917V550H905z" fill="#8fbdf0" fillOpacity=".45" />
        <path
            d="M375 140H411L375 175zM881 140H917V175zM375 608L411 643H375zM917 608V643H881zM637 152L646 142L656 152zM635 631H657L646 642zM388 381V404L377 392zM905 381V404L916 392z"
            fill="#2f82f5"
            fillOpacity=".78"
        />

        <path d="M375 301.500H917M584.500 140V643" stroke="#666" strokeWidth="1.3" />
        <circle cx="584" cy="301" r="5" fill="#ddd" fillOpacity=".6" stroke="#222" />
        <path d="M584 288v26M571 301h26" stroke="#333" />
        <path d="M570.500 308.500h9v9h-9z" fill="#118080" />
        <path d="M573.500 311.500h3v3h-3z" fill="none" stroke="#d9ffff" />
    </svg>
);

const Canvas = () => (
    <main className="flex min-w-0 grow flex-col bg-[#efefef]">
        <div className="flex min-h-0 grow">
            <div className="relative min-w-0 grow overflow-hidden">
                <Plan />
                <div className={`absolute top-[167px] left-[215px] flex flex-col items-start ${tahoma}`}>
                    <div className="flex h-[21px] items-center gap-1 border border-black bg-[#fbf8dc] px-[2px] text-[10px] whitespace-nowrap text-[#1c1c9c]">
                        <AreaIcon size={15} />
                        Click Next Point
                    </div>
                    <output className="-mt-px flex h-[21px] w-[76px] items-center justify-center border border-black bg-[#f6f2d3] text-[18px] font-bold text-[#d01818]">0.000</output>
                </div>
                <button aria-label="Pop out" className="absolute bottom-0 left-0 flex h-4 w-4 items-center justify-center border border-[#999] bg-[#e6e6e6]">
                    <svg width="12" height="12"><path d="M1 11L10 2M4 1.500h6.500V8" fill="none" stroke="#222" strokeWidth="1.6" /></svg>
                </button>
            </div>
            <div className="flex w-9 shrink-0 flex-col items-center">
                <div className="mt-[175px] h-[176px] w-5 bg-[#868686]" />
            </div>
        </div>
        <div className="h-[34px] shrink-0 pt-2 pl-[149px]">
            <div className="h-5 w-[183px] bg-[#868686]" />
        </div>
    </main>
);

/* ---------- right panel ---------- */

const parts = ["SUBSTRUCTURE", "SUPERSTRUCTURE", "ROOF WORK", "EXTERNAL WORKS"];

const RightPanel = () => (
    <aside className={`flex w-[322px] shrink-0 flex-col border-l border-[#6f94c8] bg-white text-[10px] text-black ${tahoma}`}>
        <div className="font-['Liberation_Sans',sans-serif]">
            <PanelTitle glyph="»">Templates, Parts, Inputs</PanelTitle>
        </div>
        <Tools
            className="h-[28px]"
            items={[
                ["Template settings", <GearIcon />],
                ["Reload", <RefreshIcon />],
                ["Videos", <FilmIcon />],
                ["Add folder", <FolderAddIcon />],
                ["Expand", <AddCircleIcon />],
                ["Collapse", <RemoveCircleIcon />],
            ]}
        />
        <div className="relative h-[31px] shrink-0 bg-[#e1e1e1] pt-[5px] pr-[3px] pl-[7px]">
            <select aria-label="Template set" className="h-[21px] w-full appearance-none border border-[#7a7a7a] bg-white pl-[2px]">
                <option>DE (BUILDING WORKS PLUGIN)</option>
            </select>
            <svg width="9" height="6" className="pointer-events-none absolute top-[13px] right-[7px]"><path d="M.5.5l4 4 4-4" fill="none" stroke="#555" /></svg>
        </div>
        <ul className="min-h-0 grow overflow-hidden border-t border-[#c0c0c0] leading-4">
            {parts.map((part, i) => (
                <li key={part} className="flex h-4 items-center">
                    <svg width="35" height="16" viewBox="0 0 35 16">
                        <path d={`M25.500 ${i === 0 ? 8 : 0}V${i === 3 ? 8 : 16}M26 8.500h8`} {...dots} />
                        <Expander x={21.5} plus />
                    </svg>
                    <YellowFolder />
                    <span className="ml-[2px]">{part}</span>
                </li>
            ))}
        </ul>
        <div className="flex h-4 shrink-0 bg-[#f6f6f6]">
            <button aria-label="Scroll left" className="flex w-[17px] items-center justify-center border border-r-2 border-black bg-white">
                <svg width="5" height="8"><path d="M5 0v8L0 4z" /></svg>
            </button>
            <div className="grow border border-l-0 border-black bg-[#f0f0f0]" />
            <button aria-label="Scroll right" className="ml-3 flex w-3 items-center justify-center border border-r-0 border-black bg-white">
                <svg width="5" height="8"><path d="M0 0v8l5-4z" /></svg>
            </button>
        </div>
        <Grip />
        <Tools
            className="h-[27px]"
            items={[
                ["Part settings", <GearIcon />],
                ["Delete part", <DeleteIcon />],
                ["Columns", <ColumnsIcon />],
                ["Refresh parts", <RefreshIcon />],
            ]}
        />
        <div className="h-[83px] shrink-0" />
        <Grip />
        <div className="h-[62px] shrink-0">
            <table className="w-full table-fixed text-left">
                <thead>
                    <tr className="h-[17px] border-y border-l border-black">
                        <th className="w-[83px] border-r border-black pl-[2px] font-normal">Property</th>
                        <th className="pl-[3px] font-normal">Value</th>
                    </tr>
                </thead>
            </table>
        </div>
    </aside>
);

const cell = "h-full shrink-0 overflow-hidden border-l border-[#6f94c8] text-left whitespace-nowrap";

const StatusBar = () => (
    <footer className="flex h-[21px] shrink-0 items-center overflow-hidden border-t border-[#6f94c8] bg-linear-to-b from-[#dfecfd] via-[#c3d9f7] to-[#d5e5fb] text-[10px] leading-5 text-[#1d4685]">
        <span className="w-[285px] shrink-0" />
        <span className={`${cell} w-[175px] pl-[3px]`}>627.3, 662.2</span>
        <span className={`${cell} w-[90px]`} />
        <button className={`${cell} w-[31px] bg-[#94b9eb] pl-[2px]`}>Snap</button>
        <button className={`${cell} w-[34px] bg-[#94b9eb] pl-[2px]`}>Ortho</button>
        <button className={`${cell} w-[53px] pl-[2px]`}>FreeHand</button>
        <button className={`${cell} w-[65px] pl-[3px]`}>Verify Points</button>
        <button className={`${cell} w-[137px] pl-[2px]`}>Record Mode: Point To Point</button>
        <span className={`${cell} w-[187px] pl-[3px]`}>\Storages\Local\Jobs\sdsd\Pages\nora\I</span>
        <button className={`${cell} w-[60px] bg-[#94b9eb] pl-[5px]`}>AutoScroll</button>
        <span className={`${cell} grow pl-7`}>Network Status: Disconnected</span>
    </footer>
);

export default function App() {
    return (
        <div className="h-screen overflow-hidden bg-black py-[22px] font-['Liberation_Sans',sans-serif]">
            <div className="flex h-full flex-col">
                <div className="shrink-0 font-['Roboto',sans-serif]">
                    <TitleBar />
                    <Ribbon />
                </div>
                <div className="flex min-h-0 grow bg-[#e1e1e1]">
                    <LeftPanel />
                    <Splitter />
                    <Canvas />
                    <Splitter />
                    <RightPanel />
                </div>
                <StatusBar />
            </div>
        </div>
    );
}
